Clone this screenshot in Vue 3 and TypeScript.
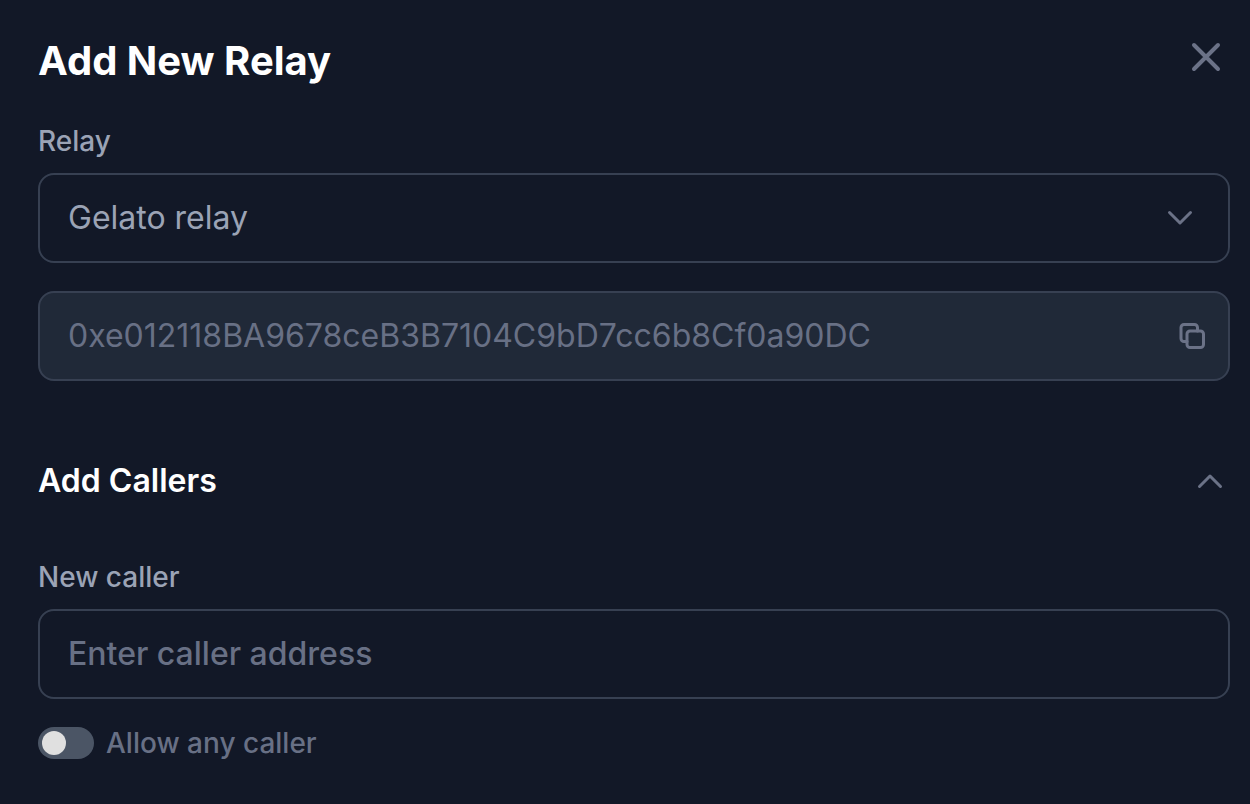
<script setup lang="ts">
import { ref } from 'vue'

const relay = ref('gelato')
const relayAddress = '0xe012118BA9678ceB3B7104C9bD7cc6b8Cf0a90DC'
const caller = ref('')
const allowAny = ref(false)
const expanded = ref(true)

function copyAddress() {
  navigator.clipboard?.writeText(relayAddress)
}
</script>

<template>
  <main class="dialog">
    <header class="head">
      <h1>Add New Relay</h1>
      <button class="icon-button close" type="button" aria-label="Close">
        <svg width="32" height="32" viewBox="0 0 32 32"><path d="M4 4 28 28M28 4 4 28" /></svg>
      </button>
    </header>

    <label class="label" for="relay">Relay</label>
    <div class="field">
      <select id="relay" v-model="relay">
        <option value="gelato">Gelato relay</option>
      </select>
      <svg class="chevron thin" width="28" height="28" viewBox="0 0 28 28"><path d="M3.5 8.500 14 19 24.500 8.500" /></svg>
    </div>

    <div class="field filled">
      <input type="text" :value="relayAddress" aria-label="Relay address" disabled />
      <button class="icon-button" type="button" aria-label="Copy address" @click="copyAddress">
        <svg class="thin" width="28" height="28" viewBox="0 0 28 28">
          <rect x="9" y="9" width="16.5" height="16.5" rx="3" />
          <path d="M9 19.5H6a3 3 0 0 1-3-3V5.5a3 3 0 0 1 3-3h10.5a3 3 0 0 1 3 3V9" />
        </svg>
      </button>
    </div>

    <section>
      <div class="section-head">
        <h2>Add Callers</h2>
        <button class="icon-button" type="button" aria-label="Toggle callers" :aria-expanded="expanded" @click="expanded = !expanded">
          <svg class="thin" width="28" height="28" viewBox="0 0 28 28"><path d="M3.5 19.500 14 9 24.500 19.500" /></svg>
        </button>
      </div>
      <div v-if="expanded">
        <label class="label" for="caller">New caller</label>
        <div class="field">
          <input id="caller" v-model="caller" class="caller" type="text" placeholder="Enter caller address" />
        </div>
        <label class="toggle">
          <input v-model="allowAny" type="checkbox" />
          <span>Allow any caller</span>
        </label>
      </div>
    </section>
  </main>
</template>

<style>
body {
  background: #121827;
}
</style>

<style scoped>
.dialog {
  padding: 37px 20px 40px 38px;
  font-family: Inter, "Liberation Sans", sans-serif;
  color: #fff;
}
.head,
.section-head {
  display: flex;
  align-items: center;
  justify-content: space-between;
}
.head {
  margin-bottom: 40px;
  padding-right: 8px;
}
h1,
h2 {
  margin: 0;
}
h1 {
  font-size: 40px;
  line-height: 48px;
  font-weight: 700;
}
h2 {
  font-size: 32px;
  line-height: 40px;
  font-weight: 600;
}
.icon-button {
  display: flex;
  padding: 0;
  border: 0;
  background: none;
  color: #6b7287;
  cursor: pointer;
}
svg {
  fill: none;
  stroke: currentColor;
  stroke-width: 4;
  stroke-linecap: round;
  stroke-linejoin: round;
}
.thin {
  stroke-width: 3;
}
.close {
  align-self: flex-start;
  margin-top: 4px;
}
.label {
  display: block;
  margin-bottom: 16px;
  font-size: 28px;
  line-height: 32px;
  font-weight: 500;
  color: #9ba3b5;
}
.field {
  display: flex;
  align-items: center;
  position: relative;
  box-sizing: border-box;
  height: 90px;
  border: 2px solid #374052;
  border-radius: 16px;
}
.field select,
.field input {
  flex: 1;
  min-width: 0;
  height: 100%;
  padding: 0 28px;
  border: 0;
  outline: 0;
  background: none;
  appearance: none;
  font: 400 32px/40px Inter, "Liberation Sans", sans-serif;
  color: #9ba3b5;
}
.field .caller {
  font-weight: 500;
}
.chevron {
  position: absolute;
  right: 34px;
  color: #6b7287;
  pointer-events: none;
}
.filled {
  margin-top: 28px;
  padding-right: 22px;
  background: #202938;
}
.field input {
  padding-bottom: 2px;
}
.field input:disabled {
  color: #687085;
}
.field input::placeholder {
  color: #687085;
  opacity: 1;
}
.section-head {
  margin: 80px 0 60px;
  padding-right: 6px;
}
.toggle {
  display: flex;
  align-items: center;
  gap: 12px;
  margin-top: 28px;
  font-size: 28px;
  line-height: 32px;
  font-weight: 500;
  color: #687085;
}
.toggle input {
  flex: none;
  width: 56px;
  height: 32px;
  margin: 0;
  padding: 4px;
  appearance: none;
  border-radius: 16px;
  background: #4b5565;
}
.toggle input::before {
  content: "";
  display: block;
  width: 24px;
  height: 24px;
  border-radius: 50%;
  background: #e0e0e0;
}
.toggle input:checked::before {
  margin-left: 24px;
}
</style>
